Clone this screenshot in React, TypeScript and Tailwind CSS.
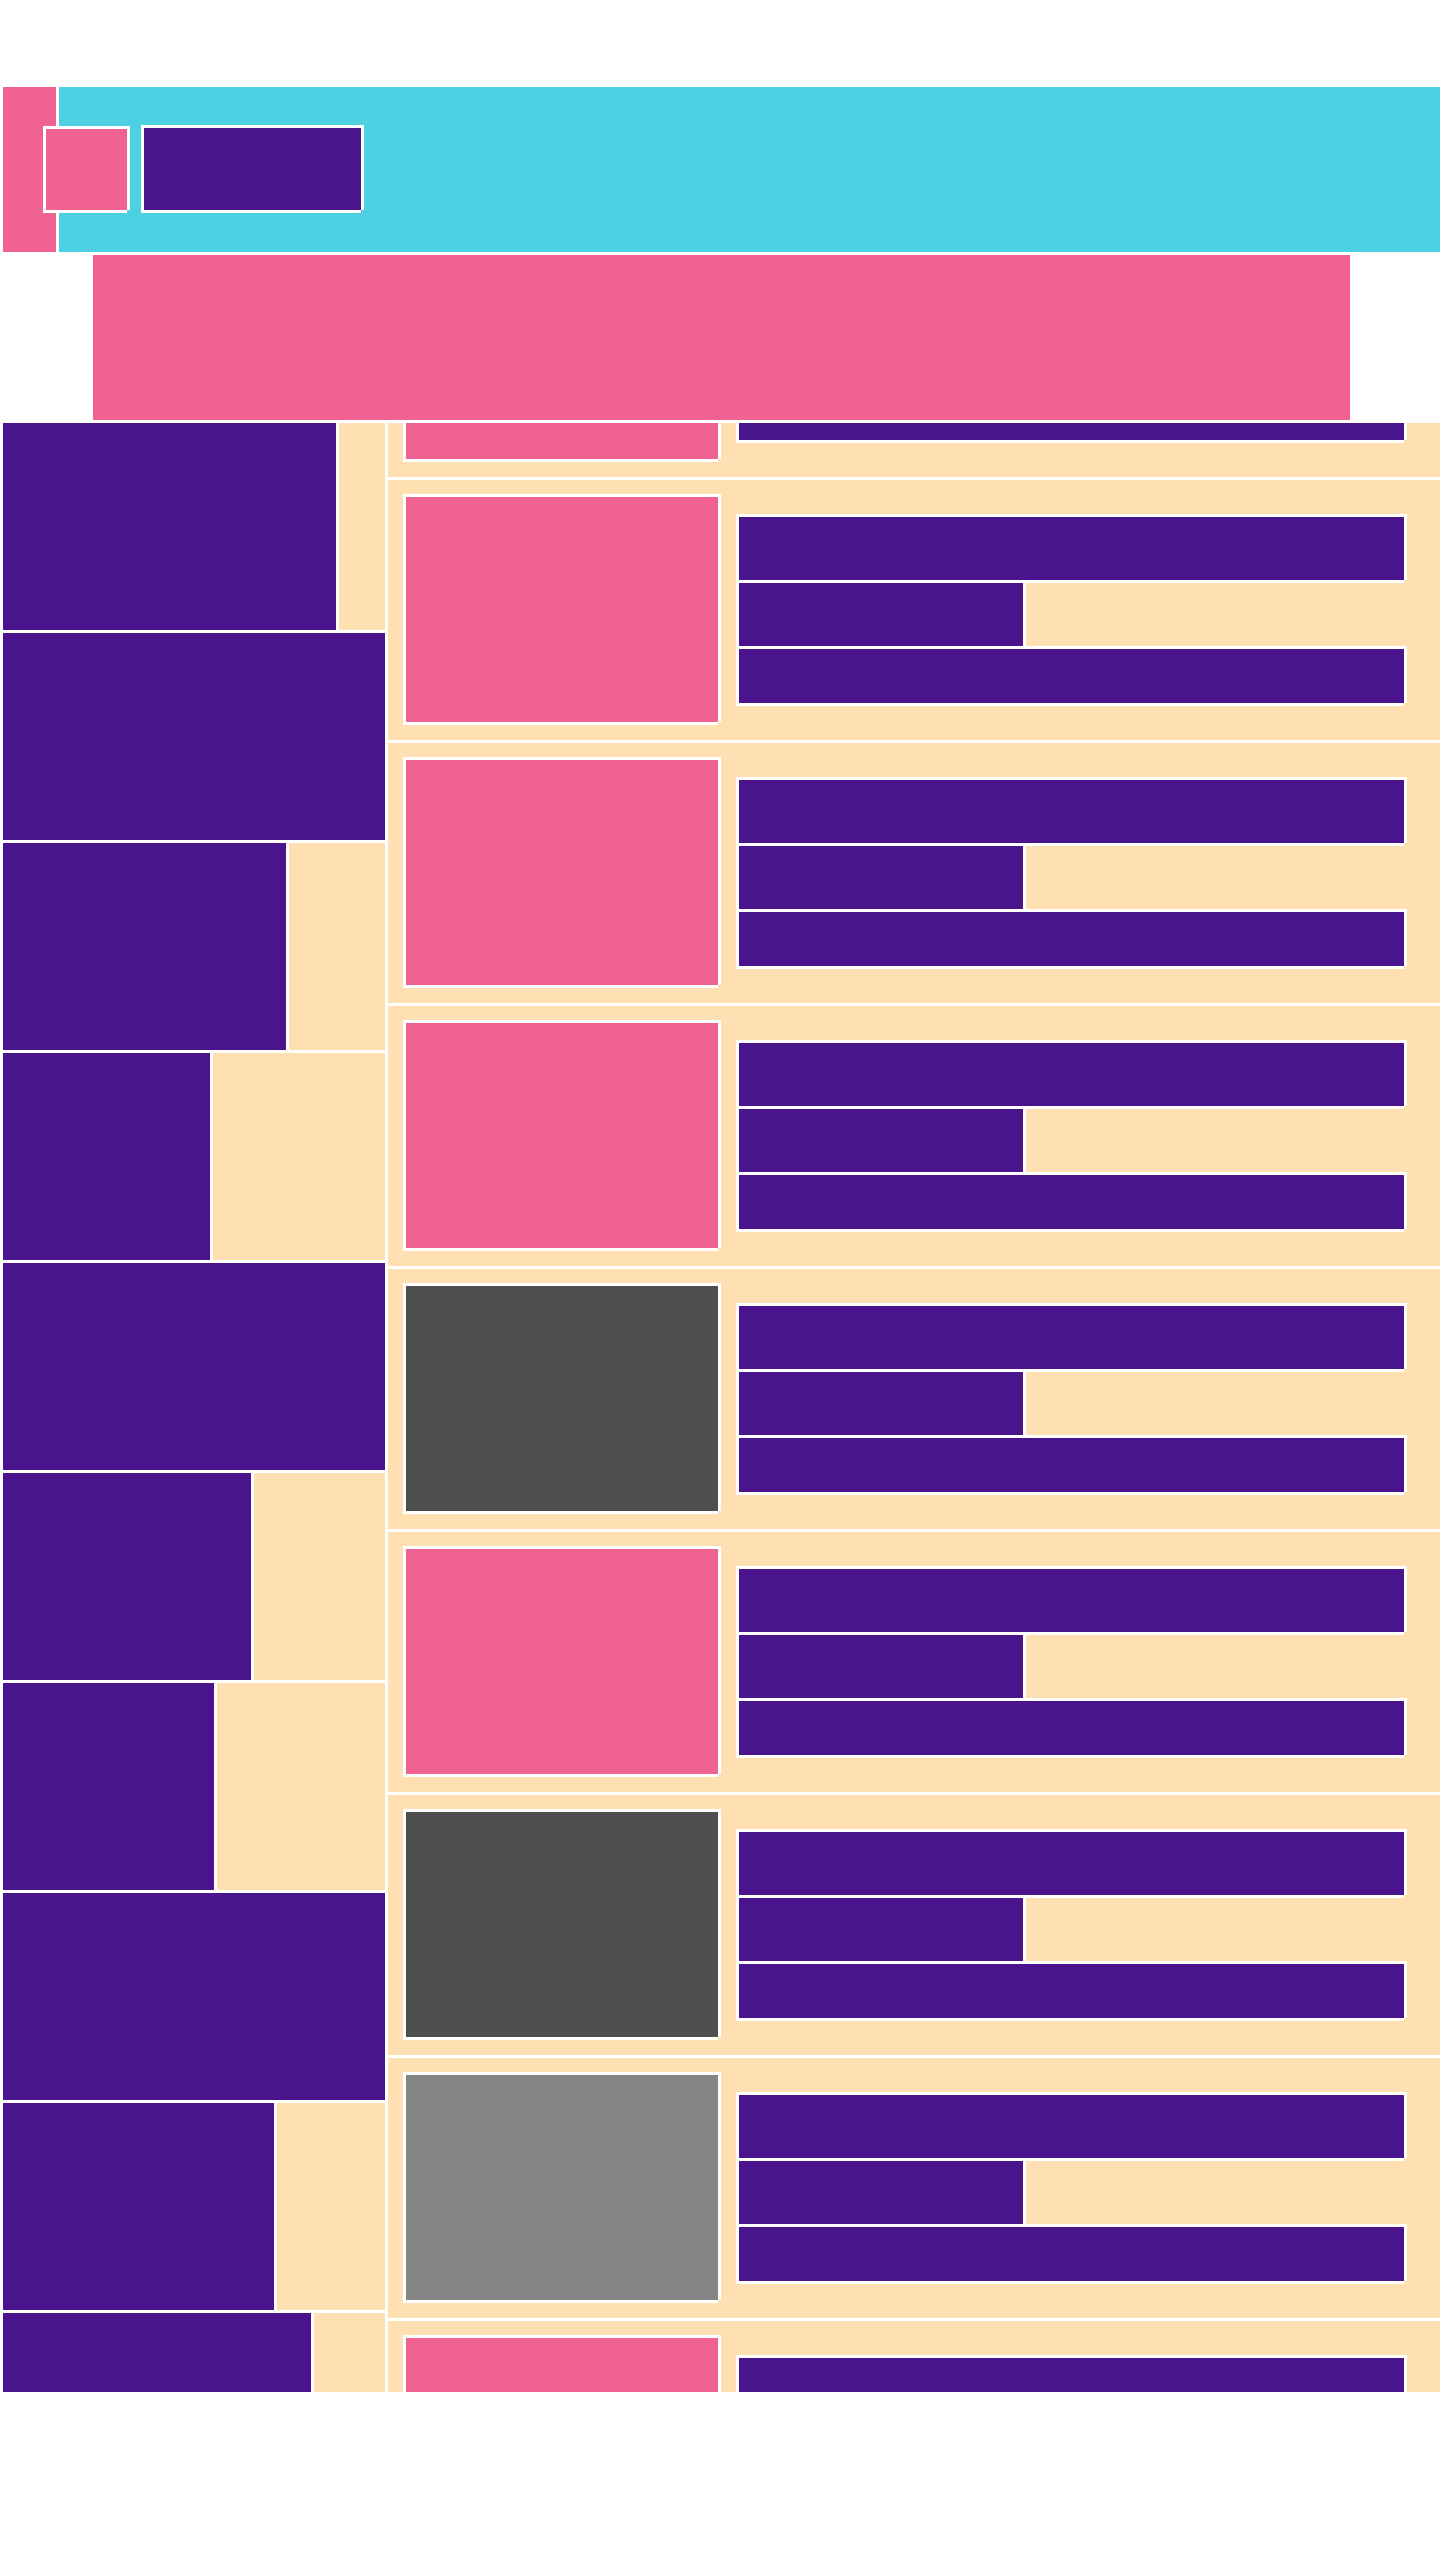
import React from "react";

const sideRows: string[] = [
  "w-[333px]",
  "",
  "w-[283px]",
  "w-[207px]",
  "",
  "w-[248px]",
  "w-[211px]",
  "",
  "w-[271px]",
  "w-[308px]",
];

const cardImages: string[] = [
  "bg-[#f06292]",
  "bg-[#f06292]",
  "bg-[#f06292]",
  "bg-[#f06292]",
  "bg-[#4f4f4f]",
  "bg-[#f06292]",
  "bg-[#4f4f4f]",
  "bg-[#858585]",
  "bg-[#f06292]",
];

const framed =
  "border-l-[3px] border-t-[3px] border-white shadow-[3px_0_0_0_#fff,0_3px_0_0_#fff]";

function SideRow({ w }: { w: string }) {
  if (!w) {
    return <div className="h-[207px] shrink-0 bg-[#4a148c]" />;
  }
  return (
    <div className="flex h-[207px] shrink-0 gap-[3px]">
      <div className={`${w} shrink-0 bg-[#4a148c]`} />
      <div className="flex-1 bg-[#ffe0b2]" />
    </div>
  );
}

function Card({ img }: { img: string }) {
  return (
    <div className="flex h-[260px] shrink-0 items-start bg-[#ffe0b2]">
      <div className={`ml-[15px] mt-[14px] h-[228px] w-[315px] shrink-0 ${img} ${framed}`} />
      <div className="ml-[18px] mr-[36px] mt-[34px] flex flex-1 flex-col">
        <div className={`h-[66px] w-full bg-[#4a148c] ${framed}`} />
        <div className={`h-[66px] w-[287px] bg-[#4a148c] ${framed}`} />
        <div className={`h-[57px] w-full bg-[#4a148c] ${framed}`} />
      </div>
    </div>
  );
}

export default function App() {
  return (
    <div className="w-[1440px] bg-white pl-[3px] pt-[87px]">
      <header className="flex h-[165px] gap-[3px]">
        <div className="w-[53px] shrink-0 bg-[#f06292]" />
        <div className="flex flex-1 items-start bg-[#4dd0e1]">
          <div className={`ml-[-16px] mt-[39px] h-[84px] w-[84px] shrink-0 bg-[#f06292] ${framed}`} />
          <div className={`ml-[14px] mt-[38px] h-[85px] w-[220px] shrink-0 bg-[#4a148c] ${framed}`} />
        </div>
      </header>
      <div className="ml-[90px] mt-[3px] h-[165px] w-[1257px] bg-[#f06292]" />
      <div className="mt-[3px] flex h-[1969px] gap-[3px]">
        <aside className="flex w-[382px] shrink-0 flex-col gap-[3px] overflow-hidden">
          {sideRows.map((w, i) => (
            <SideRow key={i} w={w} />
          ))}
        </aside>
        <main className="flex-1 overflow-hidden">
          <div className="mt-[-206px] flex flex-col gap-[3px]">
            {cardImages.map((img, i) => (
              <Card key={i} img={img} />
            ))}
          </div>
        </main>
      </div>
    </div>
  );
}
